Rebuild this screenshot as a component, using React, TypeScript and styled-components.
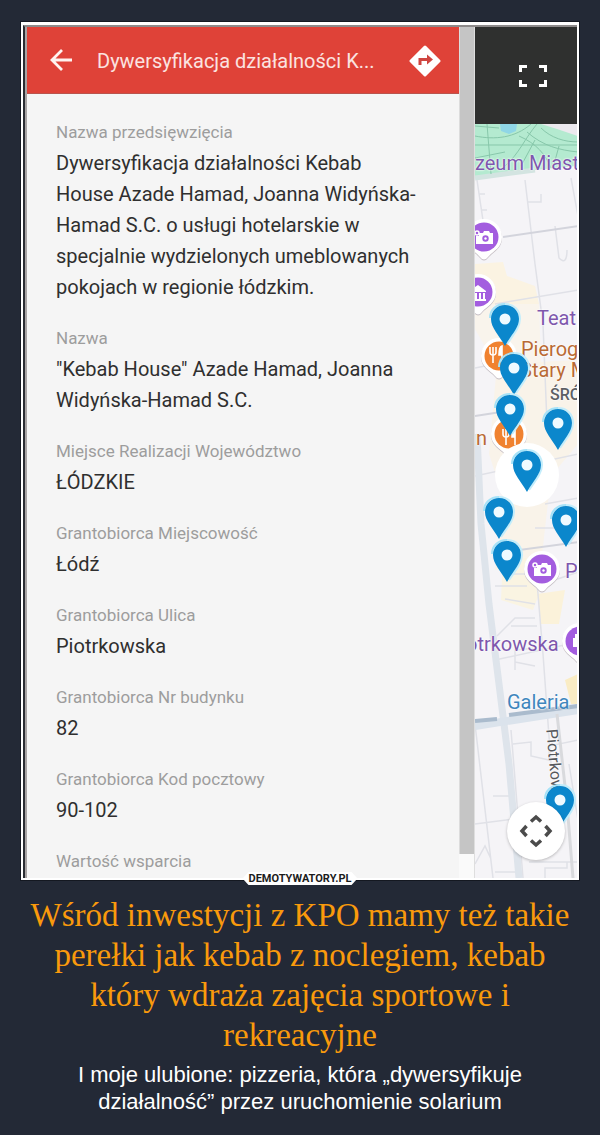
import React from "react";
import styled, { createGlobalStyle } from "styled-components";

const GlobalStyle = createGlobalStyle`
  *, *::before, *::after { box-sizing: border-box; }
  body { margin: 0; background: #232936; }
`;

const Page = styled.main`
  display: flex;
  flex-direction: column;
  padding: 22px 21px 20px;
  background: #232936;
`;

const Frame = styled.section`
  position: relative;
  display: flex;
  border: 2px solid #fff;
  border-top-width: 3px;
  outline: 1px solid #141821;
`;

const Screen = styled.div`
  flex: 1;
  min-width: 0;
  display: flex;
  border-top: 2px solid #8d8a8a;
  border-left: 2px solid #2a2d33;
`;

const Panel = styled.article`
  flex: 1;
  min-width: 0;
  border-left: 2px solid #a9a5a5;
  background: #f5f5f5;
  font-family: Roboto, "Liberation Sans", sans-serif;
`;

const PanelHeader = styled.header`
  display: flex;
  align-items: center;
  height: 67px;
  padding: 2px 18px 0 22px;
  background: #df4238;
  border-bottom: 1px solid #b9544d;
`;

const IconButton = styled.button`
  display: flex;
  padding: 0;
  border: 0;
  background: none;
  cursor: pointer;
`;

const PanelTitle = styled.h1`
  flex: 1;
  min-width: 0;
  margin: 0 0 0 22px;
  overflow: hidden;
  white-space: nowrap;
  font-size: 20px;
  font-weight: 400;
  line-height: 31px;
  color: #fbe3e0;
`;

const Details = styled.dl`
  display: flex;
  flex-direction: column;
  gap: 20px;
  margin: 0;
  padding: 23px 37px 1px 29px;
`;

const Term = styled.dt`
  font-size: 17px;
  line-height: 31px;
  color: #9d9d9d;
`;

const Value = styled.dd`
  margin: 0;
  font-size: 20px;
  line-height: 31px;
  color: #2f2f2f;
`;

const ScrollTrack = styled.div`
  width: 15px;
  display: flex;
  padding-bottom: 24px;
  background: #fafafa;
`;

const ScrollThumb = styled.div`
  flex: 1;
  border-left: 1px solid #dcdcdc;
  background: #c5c5c5;
`;

const MapColumn = styled.div`
  width: 103px;
  display: flex;
  flex-direction: column;
  border-left: 1px solid #dedede;
`;

const MapToolbar = styled.div`
  display: flex;
  align-items: center;
  justify-content: center;
  height: 97px;
  padding-left: 14px;
  background: #2f302f;
`;

const MapCanvas = styled.div`
  position: relative;
  flex: 1;
  overflow: hidden;
  background: #f5f4f7;
`;

const MapDrawing = styled.svg`
  position: absolute;
  inset: 0;
`;

const MapLabel = styled.span<{ $x: number; $y: number; $color: string; $small?: boolean }>`
  position: absolute;
  left: ${(p) => p.$x}px;
  top: ${(p) => p.$y}px;
  font-family: Roboto, "Liberation Sans", sans-serif;
  font-size: ${(p) => (p.$small ? 16 : 20)}px;
  font-weight: ${(p) => (p.$small ? 500 : 400)};
  line-height: 24px;
  white-space: nowrap;
  color: ${(p) => p.$color};
  text-shadow: 0 0 2px #fff, 0 0 2px #fff;
`;

const StreetLabel = styled(MapLabel)`
  writing-mode: vertical-rl;
  rotate: -5deg;
  font-weight: 400;
`;

const PinButton = styled.button<{ $x: number; $y: number }>`
  position: absolute;
  left: ${(p) => p.$x}px;
  top: ${(p) => p.$y}px;
  display: flex;
  padding: 0;
  border: 0;
  background: none;
  cursor: pointer;
`;

const RecenterButton = styled.button`
  position: absolute;
  left: 32px;
  bottom: 18px;
  display: flex;
  align-items: center;
  justify-content: center;
  width: 58px;
  height: 58px;
  padding: 0;
  border: 0;
  border-radius: 50%;
  background: #fff;
  box-shadow: 0 1px 3px rgba(0, 0, 0, 0.25);
  cursor: pointer;
`;

const SiteBadge = styled.a`
  position: absolute;
  left: 50%;
  bottom: -7px;
  translate: -50% 0;
  padding: 0 6px;
  background: #fff;
  clip-path: polygon(6px 0, calc(100% - 6px) 0, 100% 50%, calc(100% - 6px) 100%, 6px 100%, 0 50%);
  font-family: Roboto, "Liberation Sans", sans-serif;
  font-size: 11px;
  font-weight: 700;
  line-height: 13px;
  white-space: nowrap;
  text-decoration: none;
  color: #1c1c1c;
`;

const Headline = styled.h2`
  margin: 15px 0 0;
  font-family: "Liberation Serif", "Times New Roman", serif;
  font-size: 33px;
  font-weight: 400;
  line-height: 40px;
  text-align: center;
  color: #f99a0c;
`;

const Subline = styled.p`
  margin: 6px 0 0;
  padding: 0 40px;
  font-family: "Liberation Sans", Arial, sans-serif;
  font-size: 22px;
  line-height: 27px;
  text-align: center;
  color: #fff;
`;

const details: { term: string; value?: string }[] = [
  {
    term: "Nazwa przedsięwzięcia",
    value:
      "Dywersyfikacja działalności Kebab House Azade Hamad, Joanna Widyńska-Hamad S.C. o usługi hotelarskie w specjalnie wydzielonych umeblowanych pokojach w regionie łódzkim.",
  },
  { term: "Nazwa", value: '"Kebab House" Azade Hamad, Joanna Widyńska-Hamad S.C.' },
  { term: "Miejsce Realizacji Województwo", value: "ŁÓDZKIE" },
  { term: "Grantobiorca Miejscowość", value: "Łódź" },
  { term: "Grantobiorca Ulica", value: "Piotrkowska" },
  { term: "Grantobiorca Nr budynku", value: "82" },
  { term: "Grantobiorca Kod pocztowy", value: "90-102" },
  { term: "Wartość wsparcia" },
];

const PURPLE = "#7e57ad";
const BROWN = "#b96a35";

const labels = [
  { text: "zeum Miast", x: 0, y: 27, color: PURPLE },
  { text: "Teat", x: 62, y: 182, color: PURPLE },
  { text: "Pierog", x: 46, y: 213, color: BROWN },
  { text: "Stary M", x: 45, y: 234, color: BROWN },
  { text: "ŚRÓ", x: 75, y: 259, color: "#5d6064", small: true },
  { text: "n", x: 1, y: 302, color: BROWN },
  { text: "P", x: 90, y: 435, color: PURPLE },
  { text: "otrkowska", x: -9, y: 508, color: PURPLE },
  { text: "Galeria", x: 32, y: 566, color: "#3f86bd" },
];

const pins = [
  { x: 16, y: 181 },
  { x: 25, y: 230 },
  { x: 21, y: 271 },
  { x: 69, y: 285 },
  { x: 38, y: 327 },
  { x: 10, y: 374 },
  { x: 77, y: 382 },
  { x: 18, y: 417 },
  { x: 71, y: 662 },
];

function Pin({ x, y }: { x: number; y: number }) {
  return (
    <PinButton $x={x - 2} $y={y - 2} aria-label="Lokalizacja">
      <svg width="32" height="44" viewBox="-2 -2 32 44">
        <path d="M14 -1C5 -1 -1 5 -1 13" fill="none" stroke="#a5e2f8" strokeWidth="2" />
        <path d="M14 -1C23 -1 29 5 29 14C29 22 22 30 16 39" fill="none" stroke="#c3edfb" strokeWidth="2" />
        <path d="M14 0C6 0 0 6 0 14C0 23 8 30 14 41C20 30 28 23 28 14C28 6 22 0 14 0Z" fill="#0b87cc" />
        <circle cx="14" cy="14" r="5.5" fill="#effaff" />
      </svg>
    </PinButton>
  );
}

const BUBBLE = "M0 -18A18 18 0 0 1 18 0C18 11 9 14 4 20Q0 25 -4 20C-9 14 -18 11 -18 0A18 18 0 0 1 0 -18Z";

function PoiBubble({ x, y, color }: { x: number; y: number; color: string }) {
  return (
    <g transform={`translate(${x} ${y})`}>
      <path d={BUBBLE} fill="#c4bdc3" transform="translate(0 1)" />
      <path d={BUBBLE} fill="#fff" />
      <circle r="14.5" fill={color} />
    </g>
  );
}

function Camera({ x, y }: { x: number; y: number }) {
  return (
    <g transform={`translate(${x} ${y})`}>
      <path d="M-5 -4V-1H-8V7H9V-4H6L5 -6H0L-1 -4Z" fill="#fff" />
      <circle cx="-7" cy="-4" r="2" fill="none" stroke="#fff" strokeWidth="1.5" />
      <circle cx="1.5" cy="1.5" r="3.2" fill="#a35ddf" />
      <circle cx="1.5" cy="1.5" r="1.2" fill="#fff" />
    </g>
  );
}

function Cutlery({ x, y }: { x: number; y: number }) {
  return (
    <g transform={`translate(${x} ${y})`} fill="none" stroke="#fff" strokeWidth="1.6">
      <path d="M-6 -7V-2Q-6 1 -3 1Q0 1 0 -2V-7M-3 -7V9" />
      <path d="M6 9V-8C3 -7 3 -3 3 1H6" fill="#fff" />
    </g>
  );
}

function MapBase() {
  return (
    <MapDrawing width="103" height="754" viewBox="0 0 103 754" aria-hidden="true">
      <path d="M0 0H103V42L60 46L40 50L0 54Z" fill="#b4ead0" />
      <path d="M25 0H42L41 7L34 10L26 7Z" fill="#8fd6e6" />
      <path d="M66 0H103V12L82 5Z" fill="#ece9ee" />
      <path d="M0 54L60 46" fill="none" stroke="#d3e4e1" strokeWidth="5" />
      <g fill="none" stroke="#87c7aa" strokeWidth="1">
        <path d="M0 12C20 16 40 14 56 0M0 21H103M12 0L16 50M44 12C62 20 70 30 76 44M30 42C44 30 50 14 62 0M52 8C68 22 84 26 103 28M60 16L46 42M0 34L30 28M84 22L78 44M66 4C76 14 90 18 103 18M0 2L24 4" />
      </g>
      <path d="M0 140L28 138L32 152L60 162L64 180H0Z" fill="#fbf3e2" />
      <path d="M0 180H64L66 240H20L0 205Z" fill="#f9f4ec" />
      <path d="M22 240L103 236V320L76 352L66 440L20 446L30 380L14 330Z" fill="#f9f3e9" />
      <path d="M28 430L62 436L64 470L58 486L26 476Z" fill="#faf4e2" />
      <path d="M62 470L90 466L84 500L66 500Z" fill="#fbf2da" />
      <path d="M90 556L103 550V580H96Z" fill="#faecc4" />
      <g fill="none" stroke="#e0e1e7" strokeWidth="1.500">
        <path d="M2 56L10 110M4 70H10M6 86H12M50 56L60 140L68 200L72 300M96 54L103 92M20 180L103 166M0 244L20 240M52 78H66V70M80 102L84 134Q92 142 92 126" />
        <path d="M0 352L103 330M70 380L103 374M60 440L63 470L68 530L76 640M30 475L60 480M22 512L40 494H60M40 546V526L62 524M40 538L60 542M20 536L103 518M68 460L103 448M60 404H103M20 462H52M30 450H50M36 502H62" />
        <path d="M0 600L18 754M36 606L48 754M38 620L56 618V632L74 636V622L103 616M18 672H36M0 700L46 694M0 740L10 722L16 735M20 748H48M54 738H103M70 754V744H92V738M94 640L103 696M80 590L103 584" />
      </g>
      <g fill="none" stroke="#d3d4dc" strokeWidth="2">
        <path d="M28 113L103 102" />
        <path d="M0 292L26 288M30 428L103 418" />
      </g>
      <path d="M2 310L6 400L14 480L24 560L34 640L44 754" fill="none" stroke="#dee4eb" strokeWidth="7" />
      <path d="M0 602L103 586" fill="none" stroke="#dbe3ec" strokeWidth="8" />
      <path d="M0 597L22 595M34 591L103 582" fill="none" stroke="#aabbcd" strokeWidth="4" />
      <path d="M82 590L92 680L98 754" fill="none" stroke="#d9dadd" strokeWidth="3" />
    </MapDrawing>
  );
}

function MapPlaces() {
  return (
    <MapDrawing width="103" height="754" viewBox="0 0 103 754" aria-hidden="true">
      <PoiBubble x={9} y={113} color="#a35ddf" />
      <Camera x={9} y={113} />
      <PoiBubble x={3} y={168} color="#a35ddf" />
      <path d="M-6 167L3 161L11 167V168H-6ZM0 169H2V175H0ZM4 169H6V175H4ZM8 169H10V175H8ZM-5 175H11V177H-5Z" fill="#fff" />
      <PoiBubble x={24} y={232} color="#f08230" />
      <Cutlery x={21} y={230} />
      <PoiBubble x={34} y={310} color="#f08230" />
      <Cutlery x={34} y={312} />
      <PoiBubble x={67} y={445} color="#a35ddf" />
      <Camera x={67} y={445} />
      <PoiBubble x={105} y={517} color="#a35ddf" />
      <path d="M98 514H100V510H103V523H98Z" fill="#fff" />
      <circle cx="52" cy="351" r="32" fill="#fff" />
    </MapDrawing>
  );
}

export default function App() {
  return (
    <Page>
      <GlobalStyle />
      <Frame>
        <Screen>
          <Panel>
            <PanelHeader>
              <IconButton aria-label="Wstecz">
                <svg width="26" height="26" viewBox="0 0 26 26" fill="none" stroke="#fff3f0" strokeWidth="2.8">
                  <path d="M23 12H4M13 2L3 12L13 22" />
                </svg>
              </IconButton>
              <PanelTitle>Dywersyfikacja działalności K...</PanelTitle>
              <IconButton aria-label="Wyznacz trasę">
                <svg width="32" height="32" viewBox="0 0 32 32">
                  <path d="M16 2L30 16L16 30L2 16Z" fill="#fff" stroke="#fff" strokeWidth="3" strokeLinejoin="round" />
                  <path d="M11 20V14.500H19" fill="none" stroke="#cf4540" strokeWidth="3" />
                  <path d="M18 9.500L24 14.500L18 19.500Z" fill="#cf4540" />
                </svg>
              </IconButton>
            </PanelHeader>
            <Details>
              {details.map((d) => (
                <div key={d.term}>
                  <Term>{d.term}</Term>
                  {d.value && <Value>{d.value}</Value>}
                </div>
              ))}
            </Details>
          </Panel>
          <ScrollTrack>
            <ScrollThumb />
          </ScrollTrack>
          <MapColumn>
            <MapToolbar>
              <IconButton aria-label="Pełny ekran">
                <svg width="28" height="24" viewBox="0 0 28 24" fill="none" stroke="#fff" strokeWidth="3">
                  <path d="M1.500 8V2.500H8M20 2.500H26.500V8M26.500 16V21.500H20M8 21.500H1.500V16" />
                </svg>
              </IconButton>
            </MapToolbar>
            <MapCanvas>
              <MapBase />
              {labels.map((l) => (
                <MapLabel key={l.text} $x={l.x} $y={l.y} $color={l.color} $small={l.small}>
                  {l.text}
                </MapLabel>
              ))}
              <StreetLabel $x={67} $y={605} $color="#55585c" $small>
                Piotrkow
              </StreetLabel>
              <MapPlaces />
              {pins.map((p) => (
                <Pin key={p.y} x={p.x} y={p.y} />
              ))}
              <RecenterButton aria-label="Wyśrodkuj mapę">
                <svg width="34" height="34" viewBox="0 0 34 34" fill="none" stroke="#4b4b4b" strokeWidth="3.500">
                  <path d="M12 7.500L17 3L22 7.500M12 26.500L17 31L22 26.500M7.500 12L3 17L7.500 22M26.500 12L31 17L26.500 22" />
                </svg>
              </RecenterButton>
            </MapCanvas>
          </MapColumn>
        </Screen>
        <SiteBadge href="#">DEMOTYWATORY.PL</SiteBadge>
      </Frame>
      <Headline>
        Wśród inwestycji z KPO mamy też takie perełki jak kebab z noclegiem, kebab który wdraża zajęcia sportowe i
        rekreacyjne
      </Headline>
      <Subline>I moje ulubione: pizzeria, która „dywersyfikuje działalność” przez uruchomienie solarium</Subline>
    </Page>
  );
}
